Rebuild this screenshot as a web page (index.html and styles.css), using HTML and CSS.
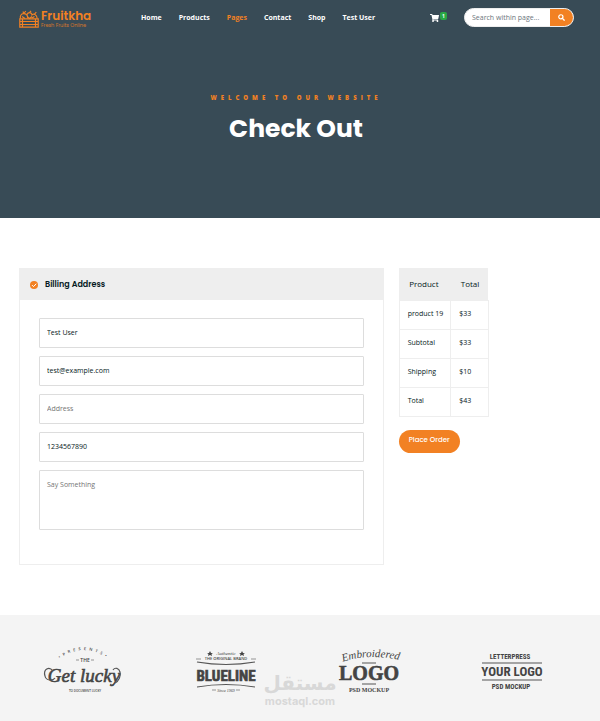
FILE: index.html
```html
<!DOCTYPE html>
<html lang="en">
<head>
<meta charset="utf-8">
<meta name="viewport" content="width=device-width, initial-scale=1">
<title>Check Out</title>
<link rel="stylesheet" href="styles.css">
</head>
<body>
<div class="banner">
  <header class="header">
    <a class="brand" href="#">
      <svg class="brand-icon" viewBox="0 0 20 18" aria-hidden="true">
        <g fill="none" stroke="currentColor" stroke-width="1.2">
          <path d="M.8 8.800h18.400v8.400H.8zM1 11.500h18M1 14.500h18M3.500 9v8M16.500 9v8"/>
          <path d="M1.500 8.500C.8 6 2 3.800 4.500 3.700S9 5 8.800 8.500M4.800 3.700 4 1.500M4.800 3.500 6.800 1M8 4.500c1-2.500 4-2.500 5 0M10.500 2.700 12 .8M12.500 5.500c2-2.500 5.300-1 5.700 3M15.500 4.200l1.800-2M3 6.500l3 2M8 6.500l2.500 2 2.500-2M13 8l2.500-1.500"/>
        </g>
      </svg>
      <span class="brand-text"><span class="brand-name">Fruitkha</span><span class="brand-tag">Fresh Fruits Online</span></span>
    </a>
    <nav class="nav">
      <a href="#">Home</a>
      <a href="#">Products</a>
      <a class="current" href="#">Pages</a>
      <a href="#">Contact</a>
      <a href="#">Shop</a>
      <a href="#">Test User</a>
    </nav>
    <div class="tools">
      <a class="cart" href="#" aria-label="Cart">
        <svg viewBox="0 0 576 512" aria-hidden="true"><path fill="currentColor" d="M528 301l47-208c4-15-8-29-23-29H159l-9-45C148 8 138 0 126 0H24C11 0 0 11 0 24v16c0 13 11 24 24 24h70l70 343a56 56 0 1 0 67 9h210a56 56 0 1 0 64-10l5-25c4-15-8-29-23-29H218l-6-32h293c11 0 21-8 23-19z"/></svg>
        <span class="badge">1</span>
      </a>
      <form class="search">
        <input type="text" placeholder="Search within page..." aria-label="Search within page">
        <button type="button" aria-label="Search">
          <svg viewBox="0 0 16 16" aria-hidden="true"><circle cx="6.500" cy="6.500" r="4.800" fill="none" stroke="currentColor" stroke-width="2.800"/><path d="m10 10 5 5" stroke="currentColor" stroke-width="3.200"/></svg>
        </button>
      </form>
    </div>
  </header>
  <div class="intro">
    <p>Welcome to our website</p>
    <h1>Check Out</h1>
  </div>
</div>

<main class="checkout">
  <section class="billing">
    <h2>
      <svg viewBox="0 0 16 16" aria-hidden="true"><circle cx="8" cy="8" r="8" fill="currentColor"/><path d="m4 8.200 3 3 5.500-5.700" fill="none" stroke="#fff" stroke-width="2"/></svg>
      Billing Address
    </h2>
    <form class="fields">
      <input type="text" value="Test User" aria-label="Name">
      <input type="email" value="test@example.com" aria-label="Email">
      <input type="text" placeholder="Address" aria-label="Address">
      <input type="tel" value="1234567890" aria-label="Phone">
      <textarea placeholder="Say Something" aria-label="Message"></textarea>
    </form>
  </section>
  <aside class="order">
    <table>
      <thead><tr><th>Product</th><th>Total</th></tr></thead>
      <tbody>
        <tr><td>product 19</td><td>$33</td></tr>
        <tr><td>Subtotal</td><td>$33</td></tr>
        <tr><td>Shipping</td><td>$10</td></tr>
        <tr><td>Total</td><td>$43</td></tr>
      </tbody>
    </table>
    <button type="button">Place Order</button>
  </aside>
</main>

<footer class="logos">
  <svg viewBox="0 0 100 50" role="img" aria-label="Get lucky">
    <defs><path id="arc" d="M20 18Q50 -10 82 18"/></defs>
    <text class="sans" font-size="4" letter-spacing="3"><textPath href="#arc" startOffset="50%">•PRESENTS•</textPath></text>
    <text class="sans" x="52" y="16" font-size="5">THE</text>
    <path class="line" d="M43 14h3M58 14h3"/>
    <text class="script heavy" x="51" y="36" font-size="19">Get lucky</text>
    <path class="line swash" d="M20 25C16 20 10 23 12 30c1 5 8 5 10 2M82 37c4-2 6-7 5-11-1-4-5-5-7-2"/>
    <text class="sans" x="52" y="46" font-size="3">TO DOCUMENT LUCKY</text>
  </svg>
  <svg viewBox="0 0 100 50" role="img" aria-label="Blueline">
    <text class="script" x="50" y="9" font-size="5">Authentic</text>
    <path class="dot" d="m34 5 1 2h2l-1.500 1 .5 2-2-1-2 1 .5-2-1.500-1h2zM66 5l1 2h2l-1.500 1 .5 2-2-1-2 1 .5-2-1.500-1h2z"/>
    <text class="sans" x="50" y="14" font-size="4">THE ORIGINAL BRAND</text>
    <path class="line" d="M20 13h5M75 13h5M36 44h4M60 44h4"/>
    <path class="line swash" d="M21 16q29 5 58 0M21 41q29-5 58 0"/>
    <text class="narrow heavy" x="50" y="35" font-size="15">BLUELINE</text>
    <text class="script" x="50" y="46" font-size="4">Since 1969</text>
  </svg>
  <svg viewBox="0 0 100 50" role="img" aria-label="Embroidered logo">
    <defs><path id="arch" d="M20 17Q50 6 84 15"/></defs>
    <text class="script" font-size="11"><textPath href="#arch" startOffset="50%">Embroidered</textPath></text>
    <path class="line swash" d="M43 17h14M43 38h14"/>
    <text class="serif heavy" x="50" y="34" font-size="20">LOGO</text>
    <text class="serif" x="50" y="46" font-size="6">PSD MOCKUP</text>
  </svg>
  <svg viewBox="0 0 100 50" role="img" aria-label="Letterpress logo">
    <text class="narrow" x="48" y="13" font-size="7">LETTERPRESS</text>
    <path class="line swash" d="M20 17h60M20 34h60"/>
    <text class="narrow" x="50" y="30" font-size="13">YOUR LOGO</text>
    <text class="narrow" x="49" y="43" font-size="7">PSD MOCKUP</text>
  </svg>
  <div class="watermark"><span lang="ar" dir="rtl">مستقل</span><span>mostaql.com</span></div>
</footer>
</body>
</html>
```
FILE: styles.css
```css
* { box-sizing: border-box; }
body {
  margin: 0;
  background: #fff;
  color: #051922;
  font-family: "Open Sans", "Noto Sans", sans-serif;
  font-size: 7px;
  line-height: 12px;
}
a { color: inherit; text-decoration: none; }
input, textarea, button { font: inherit; color: inherit; margin: 0; }
button { cursor: pointer; }

.banner { background: #384b56; color: #fff; padding-bottom: 71px; }
.header {
  display: flex;
  align-items: center;
  height: 35px;
  padding: 0 26px 0 19px;
}
.brand { display: flex; align-items: center; gap: 2px; width: 122px; padding-top: 3px; color: #f28123; }
.brand-icon { width: 20px; height: 18px; }
.brand-text { display: flex; flex-direction: column; font-family: Poppins, Inter, sans-serif; }
.brand-name { font-size: 12px; font-weight: 600; line-height: 12px; }
.brand-tag { font-size: 5px; line-height: 7px; opacity: .8; }
.nav { display: flex; gap: 17px; font-weight: 700; white-space: nowrap; }
.nav .current { color: #f28123; }
.tools { display: flex; align-items: center; gap: 17px; margin-left: auto; }
.cart { display: flex; align-items: center; gap: 1px; }
.cart svg { width: 9px; height: 8px; }
.badge {
  width: 7px;
  height: 8px;
  margin-bottom: 3px;
  border-radius: 2px;
  background: #28a745;
  font-size: 5px;
  font-weight: 700;
  line-height: 8px;
  text-align: center;
}
.search {
  display: flex;
  width: 110px;
  height: 19px;
  overflow: hidden;
  border: 1px solid #eee;
  border-radius: 10px;
  background: #fff;
}
.search input { flex: 1; min-width: 0; padding: 0 0 0 7px; border: 0; background: none; color: #495057; }
.search input::placeholder { color: #6c757d; }
.search button {
  display: flex;
  align-items: center;
  justify-content: center;
  width: 23px;
  padding: 0;
  border: 0;
  background: #f28123;
  color: #fff;
}
.search button svg { width: 7px; height: 7px; }

.intro { padding: 57px 8px 0 0; text-align: center; }
.intro p {
  margin: 0;
  color: #f28123;
  font-size: 6px;
  font-weight: 800;
  letter-spacing: 4px;
  text-transform: uppercase;
}
.intro h1 {
  margin: 7px 0 0;
  font: 700 25px/36px Poppins, Inter, sans-serif;
}

.checkout {
  display: grid;
  grid-template-columns: 2fr 1fr;
  gap: 15px;
  padding: 50px 19px;
}
.billing { border: 1px solid #eee; }
.billing h2 {
  display: flex;
  align-items: center;
  gap: 7px;
  height: 31px;
  margin: 0;
  padding: 0 10px;
  background: #eee;
  font: 600 8px/12px Poppins, Inter, sans-serif;
}
.billing h2 svg { width: 8px; height: 8px; color: #f28123; }
.fields { display: grid; gap: 8px; padding: 18px 19px 34px; }
.fields input, .fields textarea {
  display: block;
  width: 100%;
  height: 30px;
  padding: 0 7px 2px;
  border: 1px solid #ddd;
  border-radius: 1px;
  background: #fff;
}
.fields textarea { height: 60px; padding: 8px 7px; resize: none; }
.fields ::placeholder { color: #757575; }

.order table { border-collapse: collapse; }
.order th {
  height: 32px;
  padding: 0 9px 0 10px;
  border: 0;
  background: #eee;
  font-size: 8px;
  font-weight: 400;
  text-align: left;
}
.order td { height: 29px; padding: 0 7px 1px 8px; border: 1px solid #eee; }
.order button {
  display: block;
  margin-top: 13px;
  height: 23px;
  padding: 0 10px 2px;
  border: 0;
  border-radius: 12px;
  background: #f28123;
  color: #fff;
  font: 500 7px/12px Poppins, Inter, sans-serif;
}

.logos {
  position: relative;
  display: grid;
  grid-template-columns: repeat(4, 1fr);
  justify-items: center;
  padding: 31px 17px 25px 11px;
  background: #f4f4f4;
}
.logos svg { width: 100px; height: 50px; }
.logos text { fill: #444; text-anchor: middle; }
.sans { font-family: "Open Sans", sans-serif; font-weight: 600; }
.narrow { font-family: "Roboto Condensed", "Liberation Sans Narrow", "Liberation Sans", sans-serif; font-weight: 700; }
.serif { font-family: "Liberation Serif", serif; font-weight: 700; }
.script { font-family: "Liberation Serif", serif; font-style: italic; }
.heavy { stroke: #444; stroke-width: .6; }
.line { fill: none; stroke: #555; stroke-width: .6; }
.dot { fill: #444; }
.swash { stroke-width: 1.200; }
.watermark {
  position: absolute;
  left: 50%;
  bottom: 14px;
  display: flex;
  flex-direction: column;
  align-items: center;
  transform: translateX(-50%);
  color: #d8d8d8;
  font: 700 11px/12px Inter, sans-serif;
}
.watermark [lang="ar"] { font: 700 20px/24px "DejaVu Sans", sans-serif; }
```
